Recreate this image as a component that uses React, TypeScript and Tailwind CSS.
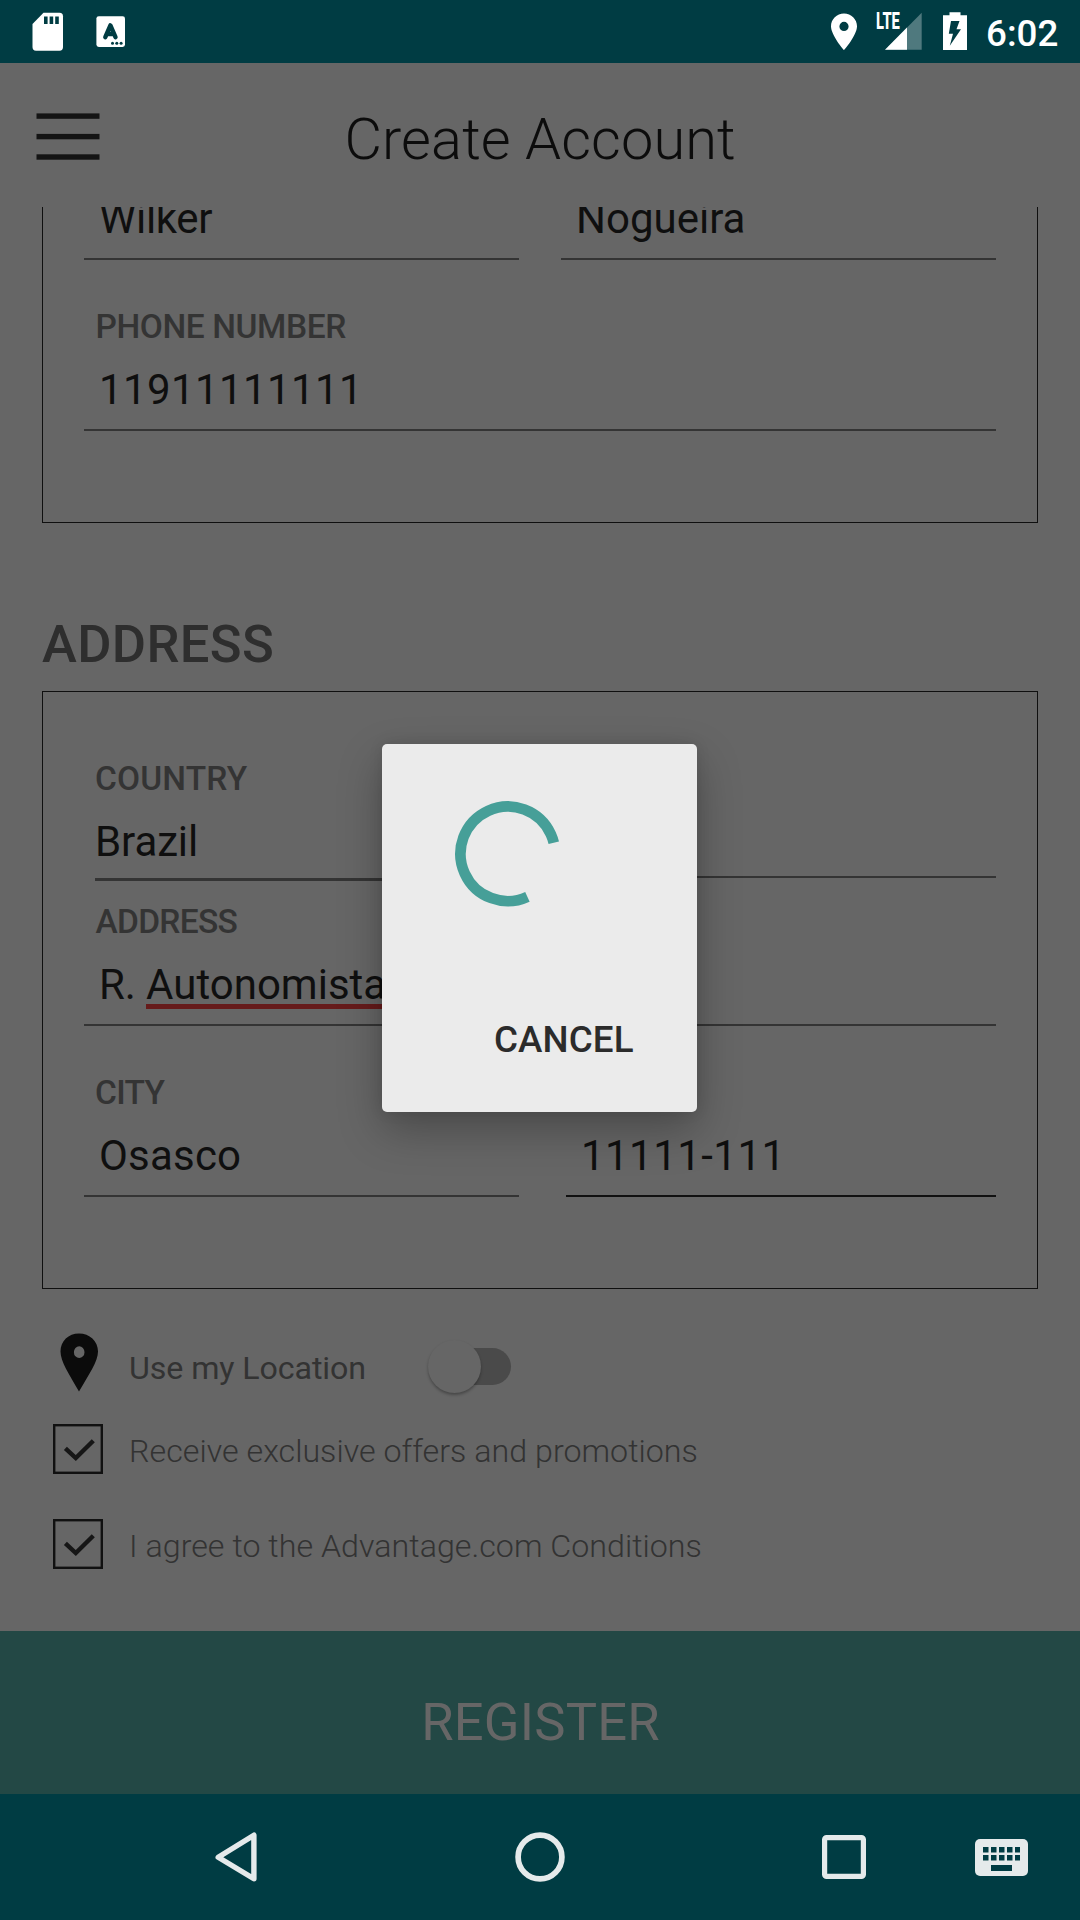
import type { ReactNode } from "react";

function StatusBar() {
  return (
    <header className="flex h-[63px] shrink-0 items-start bg-[#003c43] text-white">
      <svg className="ml-8 mt-3" width="32" height="40" viewBox="0 0 32 40" fill="none">
        <path d="M11.5 .7H27.5Q31 .7 31 4.2V35Q31 38.7 27.5 38.7H4Q.5 38.7 .5 35V12Z" fill="#fff" />
        <path d="M12 4.5h3.6v7.5H12zM17.6 4.5h3.6v7.5h-3.6zM23.2 4.5h3.6v7.5h-3.6z" fill="#003c43" />
      </svg>
      <svg className="ml-8 mt-4" width="30" height="32" viewBox="0 0 30 32" fill="none">
        <rect x=".4" y=".2" width="28.6" height="30.8" rx="2.4" fill="#fff" />
        <path d="M9.3 21.2L14.4 9.4L19.500 21.2M11 18H18" stroke="#003c43" strokeWidth="4.400" strokeLinecap="round" strokeLinejoin="round" />
        <circle cx="16.5" cy="27.3" r="1.5" fill="#003c43" />
        <circle cx="20.8" cy="27.3" r="1.5" fill="#003c43" />
        <circle cx="25.1" cy="27.3" r="1.5" fill="#003c43" />
      </svg>
      <svg className="ml-auto mt-[13px]" width="27" height="38" viewBox="0 0 27 38">
        <path
          fillRule="evenodd"
          fill="#fff"
          d="M13 .5C5.800 .5 0 6.200 0 13.300C0 22.500 13 37.200 13 37.200S26 22.500 26 13.300C26 6.200 20.200 .5 13 .5ZM13 8.800a4.600 4.600 0 1 1 0 9.200a4.600 4.600 0 1 1 0-9.200Z"
        />
      </svg>
      <div className="relative ml-[18px] mt-3 h-[38px] w-[46px]">
        <svg className="ml-[9px]" width="37" height="38" viewBox="0 0 37 38">
          <path d="M36.700 .7V37.700H0Z" fill="#4f797e" />
          <path d="M22 15.600V37.700H0Z" fill="#fff" />
        </svg>
        <span className="absolute left-0 top-[-1px] origin-left scale-x-[0.640] text-[23px] leading-[22px] font-extrabold">LTE</span>
      </div>
      <svg className="ml-[21px] mt-3" width="24" height="38" viewBox="0 0 24 38">
        <path d="M6.500 .3H17.500V3.300H24V38H0V3.300H6.500Z" fill="#fff" />
        <path d="M8 9H16.500L13.500 17.300H18L6.800 33.800L10 21.800H5.800Z" fill="#003c43" />
      </svg>
      <span className="ml-[19px] mr-[20px] mt-3 w-[74px] whitespace-nowrap text-[36.750px] leading-[44px] font-medium">
        6:02
      </span>
    </header>
  );
}

function Label({ children, className = "" }: { children: ReactNode; className?: string }) {
  return (
    <div className={`h-10 whitespace-nowrap text-[33.500px] leading-[42px] font-medium text-[#343434] ${className}`}>{children}</div>
  );
}

function Value({ children, className = "" }: { children?: ReactNode; className?: string }) {
  return (
    <div className={`h-[66px] whitespace-nowrap border-b-2 pl-[15px] text-[42px] leading-[50px] text-[#0f0f0f] ${className}`}>
      {children}
    </div>
  );
}

function CheckRow({ children, className = "" }: { children: ReactNode; className?: string }) {
  return (
    <div className={`flex h-[50px] items-start ${className}`}>
      <svg className="ml-[53px]" width="50" height="50" viewBox="0 0 50 50" fill="none">
        <rect x="1.200" y="1.200" width="47.600" height="47.600" stroke="#111" strokeWidth="2.400" />
        <path d="M12.400 24.300L22.800 34L40.300 16.800" stroke="#161616" strokeWidth="4.400" />
      </svg>
      <span className="ml-[26px] mt-[7px] whitespace-nowrap text-[32.200px] leading-[40px] font-light tracking-[0.020px] text-[#333]">
        {children}
      </span>
    </div>
  );
}

function LoadingDialog() {
  return (
    <div className="absolute left-[382px] top-[744px] flex h-[368px] w-[315px] flex-col rounded-[5px] bg-[#ebebeb] shadow-[0_18px_44px_rgba(0,0,0,0.28),0_0_14px_rgba(0,0,0,0.1)]">
      <svg className="ml-[72px] mt-[56px]" width="108" height="108" viewBox="0 0 108 108" fill="none">
        <circle
          cx="53.800"
          cy="53.800"
          r="47.300"
          pathLength="360"
          stroke="#469f98"
          strokeWidth="10.700"
          strokeDasharray="281 79"
          transform="rotate(65.500 53.800 53.800)"
        />
      </svg>
      <button className="ml-[112px] mt-[110px] h-11 w-[142px] whitespace-nowrap text-left text-[36.750px] leading-[44px] font-medium tracking-[0.100px] text-[#2b2b2b]">
        CANCEL
      </button>
    </div>
  );
}

export default function App() {
  return (
    <div className="relative flex h-[1920px] w-[1080px] flex-col overflow-hidden bg-[#666] font-['Roboto',sans-serif]">
      <StatusBar />

      <div className="flex h-[144px] shrink-0 items-start">
        <svg className="ml-9 mt-[50px]" width="64" height="48" viewBox="0 0 64 48" fill="#141414">
          <rect x=".5" y=".4" width="63" height="5.400" />
          <rect x=".5" y="20.900" width="63" height="5.400" />
          <rect x=".5" y="41.300" width="63" height="5.400" />
        </svg>
        <h1 className="ml-[244.500px] mt-[41px] whitespace-nowrap text-[57.750px] leading-[70px] font-light tracking-[0.100px] text-[#0c0c0c]">
          Create Account
        </h1>
      </div>

      <main className="flex h-[1424px] shrink-0 flex-col overflow-hidden">
        <section className="mx-[42px] -mt-[13px] h-[329px] shrink-0 border-x border-b border-[#0f0f0f] px-[41px]">
          <div className="grid grid-cols-2 gap-x-[42px]">
            <Value className="border-[#343434] tracking-[-0.300px]">Wilker</Value>
            <Value className="border-[#343434]">Nogueira</Value>
          </div>
          <Label className="mt-[46px] pl-[11.500px] tracking-[-0.420px]">PHONE NUMBER</Label>
          <Value className="mt-[19px] border-[#343434] tracking-[0.400px]">11911111111</Value>
        </section>

        <h2 className="ml-[42px] mt-[91px] h-[61px] shrink-0 whitespace-nowrap text-[52.500px] leading-[60px] font-medium tracking-[0.350px] text-[#2e2e2e]">
          ADDRESS
        </h2>

        <section className="mx-[42px] mt-4 h-[598px] shrink-0 border border-[#0f0f0f] px-[41px] pt-[66px]">
          <div className="grid grid-cols-2 items-start gap-x-[42px]">
            <div className="ml-[11px]">
              <Label className="tracking-[0.150px]">COUNTRY</Label>
              <div className="mt-[19px] h-16 whitespace-nowrap border-b-3 border-[#343434] text-[42px] leading-[50px] tracking-[-0.100px] text-[#0f0f0f]">
                Brazil
              </div>
            </div>
            <div className="h-[120px] border-b-2 border-[#343434]" />
          </div>
          <Label className="mt-5 pl-[11.500px] tracking-[-0.700px]">ADDRESS</Label>
          <Value className="mt-[19px] border-[#343434]">
            <span className="tracking-[-0.100px]">R. </span>
            <span className="relative inline-block">
              Autonomistas
              <span className="absolute left-0 right-0 top-[44px] h-[5px] bg-[#661b1b]" />
            </span>
          </Value>
          <div className="mt-[46px] grid grid-cols-[435px_430px] items-end justify-between">
            <div>
              <Label className="pl-[11px] tracking-[-0.700px]">CITY</Label>
              <Value className="mt-[19px] border-[#343434] tracking-[0.200px]">Osasco</Value>
            </div>
            <Value className="border-[#111] tracking-[0.450px]">11111-111</Value>
          </div>
        </section>

        <div className="mt-[37px] flex h-20 shrink-0 items-start">
          <svg className="ml-[60px] mt-[7px]" width="38" height="59" viewBox="0 0 38 59">
            <path
              fillRule="evenodd"
              fill="#0b0b0b"
              d="M19 .5C8.500 .5 .5 8 .5 18.500C.5 28.500 9 41 19 58.500C29 41 38 28.500 38 18.500C38 8 29.500 .5 19 .5ZM19.200 13.300a5.300 5.900 0 1 1 0 11.800a5.300 5.900 0 1 1 0-11.800Z"
            />
          </svg>
          <span className="ml-[31px] mt-[22px] w-[239px] whitespace-nowrap text-[32.200px] leading-[40px] tracking-[-0.100px] text-[#333]">
            Use my Location
          </span>
          <div className="relative ml-[68px] mt-[22px] h-[37px] w-[75px] rounded-full bg-[#4a4a4a]">
            <div className="absolute left-[-8px] top-[-8px] size-[53px] rounded-full bg-[#666] shadow-[0_2px_3px_rgba(0,0,0,0.3)]" />
          </div>
        </div>
        <CheckRow className="mt-[18px]">Receive exclusive offers and promotions</CheckRow>
        <CheckRow className="mt-[45px]">I agree to the Advantage.com Conditions</CheckRow>
      </main>

      <button className="h-[163px] shrink-0 bg-[#234845] pl-px pt-[18px] text-[52.500px] leading-[60px] tracking-[0.200px] text-[#666]">
        REGISTER
      </button>

      <nav className="flex h-[126px] shrink-0 items-center bg-[#003c43]">
        <svg className="ml-[214px]" width="44" height="52" viewBox="0 0 44 52" fill="none">
          <path d="M39.900 4.200V47.800L4.200 26.300Z" stroke="#e5eaeb" strokeWidth="5.400" strokeLinejoin="round" />
        </svg>
        <svg className="ml-[257px]" width="50" height="50" viewBox="0 0 50 50" fill="none">
          <circle cx="25" cy="25" r="21.900" stroke="#e5eaeb" strokeWidth="5.700" />
        </svg>
        <svg className="ml-[257px]" width="44" height="44" viewBox="0 0 44 44" fill="none">
          <rect x="2.600" y="2.600" width="38.800" height="38.800" rx="2" stroke="#e5eaeb" strokeWidth="5.200" />
        </svg>
        <svg className="ml-[109px]" width="53" height="37" viewBox="0 0 53 37">
          <rect width="53" height="37" rx="5" fill="#e5eaeb" />
          <path
            fill="#003c43"
            d="M8 8h5.500v5.500H8zM16 8h5.500v5.500H16zM24 8h5.500v5.500H24zM32 8h5.500v5.500H32zM40 8h5v5.500h-5zM8 16h5.500v5.500H8zM16 16h5.500v5.500H16zM24 16h5.500v5.500H24zM32 16h5.500v5.500H32zM40 16h5v5.500h-5zM16 26h21v6H16z"
          />
        </svg>
      </nav>

      <LoadingDialog />
    </div>
  );
}
